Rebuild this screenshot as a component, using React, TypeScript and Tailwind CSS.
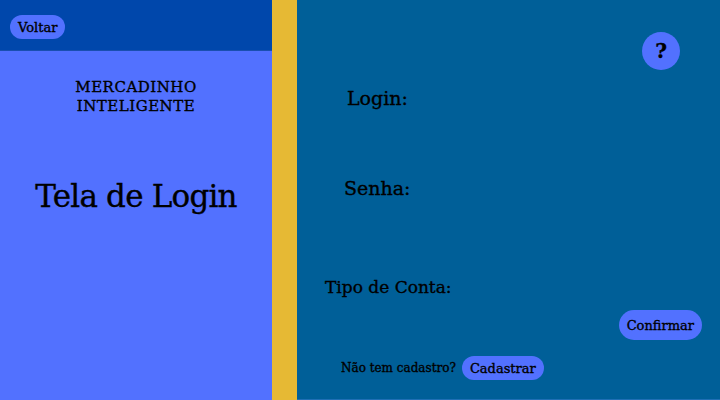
export default function App() {
  const font = { fontFamily: '"DejaVu Serif", "Liberation Serif", serif' }

  return (
    <div className="flex w-[720px] h-[400px] overflow-hidden text-black bg-[#1f6fb5] [-webkit-text-stroke:0.35px_black]" style={font}>
      {/* painel esquerdo */}
      <div className="flex flex-col w-[272px] h-[400px] bg-[#5271ff]">
        <div className="flex items-start h-[51px] pt-[15px] px-[10px] bg-[#0047ab] border-b border-[#1a4fb0]">
          <button className="h-[24px] px-[8px] rounded-full bg-[#5271ff] text-[13px] leading-none">Voltar</button>
        </div>
        <div className="flex flex-col items-center pt-[27px]">
          <p className="text-[15px] leading-[19px] tracking-[0.5px] text-center">MERCADINHO<br />INTELIGENTE</p>
          <h1 className="mt-[65px] text-[31px] leading-none tracking-[-0.8px]">Tela de Login</h1>
        </div>
      </div>

      {/* faixa amarela */}
      <div className="w-[25px] h-[400px] bg-[#e6b934]" />

      {/* painel direito */}
      <div className="flex flex-col w-[423px] h-[399px] bg-[#005f98]">
        <div className="flex justify-end pt-[32px] pr-[40px]">
          <button className="flex items-center justify-center w-[38px] h-[38px] rounded-full bg-[#5271ff] text-[20px] font-bold">?</button>
        </div>
        <div className="flex flex-col pl-[50px]">
          <span className="mt-[19px] text-[19px] leading-none">Login:</span>
          <span className="mt-[71px] ml-[-3px] text-[19px] leading-none">Senha:</span>
          <span className="mt-[81px] ml-[-22px] text-[17px] leading-none">Tipo de Conta:</span>
        </div>
        <div className="flex justify-end pr-[18px] mt-[14px]">
          <button className="h-[30px] px-[8px] rounded-full bg-[#5271ff] text-[13px] leading-none">Confirmar</button>
        </div>
        <div className="flex items-center gap-[6px] pl-[44px] mt-[16px]">
          <span className="text-[12px] leading-none">Não tem cadastro?</span>
          <button className="h-[24px] px-[8px] rounded-full bg-[#5271ff] text-[13px] leading-none">Cadastrar</button>
        </div>
      </div>
    </div>
  )
}
